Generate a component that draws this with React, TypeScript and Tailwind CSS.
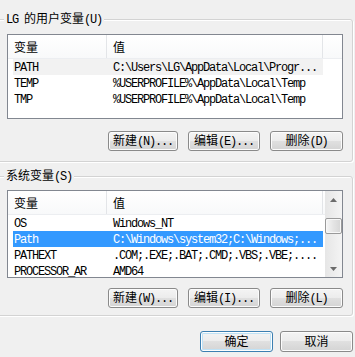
import React from "react";

const cjk = "font-['Noto_Sans_CJK_SC',sans-serif] text-[12px] leading-[16px]";
const mono = "font-['Liberation_Mono','DejaVu_Sans_Mono',monospace] text-[12px] leading-[16px] tracking-[-1.2px]";

function T({ s }: { s: string }) {
  const parts = s.split(/([\u4e00-\u9fff]+)/).filter((p) => p.length > 0);
  return (
    <>
      {parts.map((p, i) =>
        /[\u4e00-\u9fff]/.test(p) ? (
          <span key={i} className={cjk}>
            {p}
          </span>
        ) : (
          <span key={i} className={`${mono} whitespace-pre`}>
            {p}
          </span>
        )
      )}
    </>
  );
}

function Btn({ label, className = "", def = false }: { label: string; className?: string; def?: boolean }) {
  return (
    <div
      className={`flex items-center justify-center rounded-[3px] border text-[12px] leading-[16px] text-black bg-[linear-gradient(to_bottom,#f4f4f4_0%,#ececec_50%,#e0e0e0_50%,#d4d4d4_100%)] ${
        def
          ? "border-[#3c7fb1] shadow-[inset_0_0_0_1px_#fdfdfd,inset_0_0_0_2px_#bfe2f6]"
          : "border-[#8a8a8a] shadow-[inset_0_0_0_1px_#fcfcfc]"
      } ${className}`}
    >
      <span className="whitespace-nowrap">
        <T s={label} />
      </span>
    </div>
  );
}

type Row = { n: string; v: string; sel?: "blue" | "gray" };

function ListView({ rows, className, scroll }: { rows: Row[]; className: string; scroll?: boolean }) {
  return (
    <div className={`ml-[9px] w-[336px] border border-[#828790] bg-white flex overflow-hidden text-[12px] leading-[16px] ${className}`}>
      <div className="flex-1 min-w-0 flex flex-col">
        <div className="flex h-[24px] shrink-0 bg-[linear-gradient(to_bottom,#ffffff,#f8f9fa)] border-b border-[#eceef1]">
          <div className="w-[99px] shrink-0 border-r border-[#e3e5e8] pl-[6px] flex items-center pt-[1px]">
            <T s="变量" />
          </div>
          <div className="w-[216px] shrink-0 border-r border-[#e3e5e8] pl-[6px] flex items-center pt-[1px]">
            <T s="值" />
          </div>
          <div className="flex-1" />
        </div>
        {rows.map((r, i) => (
          <div key={i} className="flex h-[16px] shrink-0">
            <div
              className={`ml-[5px] w-[310px] flex ${
                r.sel === "blue" ? "bg-[#3399ff] text-white" : r.sel === "gray" ? "bg-[#f2f2f2] text-black" : "text-black"
              }`}
            >
              <div className="w-[94px] shrink-0 pl-[1px] overflow-hidden whitespace-nowrap">
                <T s={r.n} />
              </div>
              <div className="w-[216px] shrink-0 pl-[6px] overflow-hidden whitespace-nowrap">
                <T s={r.v} />
              </div>
            </div>
          </div>
        ))}
      </div>
      {scroll && (
        <div className="w-[17px] shrink-0 flex flex-col bg-[linear-gradient(to_right,#e6e6e6,#f4f4f4)]">
          <div className="h-[17px] shrink-0 flex items-center justify-center">
            <svg width="7" height="4" viewBox="0 0 7 4">
              <path d="M0 4 L3.5 0 L7 4 Z" fill="#6b6b6b" />
            </svg>
          </div>
          <div className="flex-1 flex flex-col">
            <div className="mt-[10px] h-[16px] rounded-[2px] border border-[#9a9a9a] bg-[linear-gradient(to_right,#f6f6f6,#e4e4e4_50%,#d6d6d6)] shadow-[inset_0_0_0_1px_#f8f8f8]" />
          </div>
          <div className="h-[17px] shrink-0 flex items-center justify-center">
            <svg width="7" height="4" viewBox="0 0 7 4">
              <path d="M0 0 L3.5 4 L7 0 Z" fill="#6b6b6b" />
            </svg>
          </div>
        </div>
      )}
    </div>
  );
}

function Group({ label, className, children }: { label: string; className: string; children: React.ReactNode }) {
  return (
    <div
      className={`relative ml-[-3px] w-[356px] rounded-[3px] border border-[#d3d3d3] shadow-[inset_1px_1px_0_#ffffff,1px_1px_0_#ffffff] flex flex-col ${className}`}
    >
      <div className="absolute left-[6px] top-[-10px] px-[2px] bg-[#f0f0f0] text-[12px] leading-[16px] text-black whitespace-nowrap">
        <T s={label} />
      </div>
      {children}
    </div>
  );
}

export default function App() {
  return (
    <div className="w-[355px] h-[357px] bg-[#f0f0f0] overflow-hidden pt-[19px] flex flex-col text-black text-[12px] leading-[16px]">
      <Group label="LG 的用户变量(U)" className="h-[143px] pt-[14px]">
        <ListView
          className="h-[85px]"
          rows={[
            { n: "PATH", v: "C:\\Users\\LG\\AppData\\Local\\Progr...", sel: "gray" },
            { n: "TEMP", v: "%USERPROFILE%\\AppData\\Local\\Temp" },
            { n: "TMP", v: "%USERPROFILE%\\AppData\\Local\\Temp" },
          ]}
        />
        <div className="mt-[12px] flex justify-end gap-[10px] pr-[9px]">
          <Btn label="新建(N)..." className="w-[70px] h-[20px]" />
          <Btn label="编辑(E)..." className="w-[72px] h-[20px]" />
          <Btn label="删除(D)" className="w-[73px] h-[20px]" />
        </div>
      </Group>
      <Group label="系统变量(S)" className="mt-[14px] h-[140px] pt-[13px]">
        <ListView
          className="h-[88px]"
          scroll
          rows={[
            { n: "OS", v: "Windows_NT" },
            { n: "Path", v: "C:\\Windows\\system32;C:\\Windows;...", sel: "blue" },
            { n: "PATHEXT", v: ".COM;.EXE;.BAT;.CMD;.VBS;.VBE;...." },
            { n: "PROCESSOR_AR", v: "AMD64" },
          ]}
        />
        <div className="mt-[10px] flex justify-end gap-[10px] pr-[9px]">
          <Btn label="新建(W)..." className="w-[70px] h-[20px]" />
          <Btn label="编辑(I)..." className="w-[72px] h-[20px]" />
          <Btn label="删除(L)" className="w-[73px] h-[20px]" />
        </div>
      </Group>
      <div className="mt-[15px] flex justify-end gap-[7px] pr-[2px]">
        <Btn label="确定" def className="w-[73px] h-[21px]" />
        <Btn label="取消" className="w-[73px] h-[21px]" />
      </div>
    </div>
  );
}
